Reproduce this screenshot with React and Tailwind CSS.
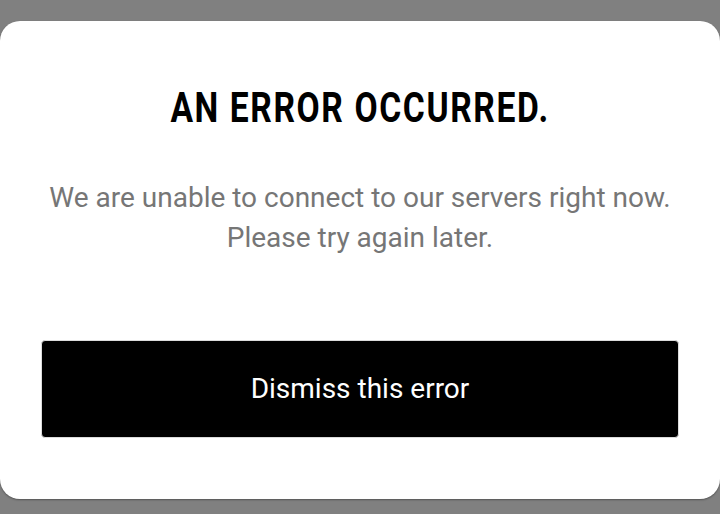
export default function App() {
  return (
    <div className="h-[514px] w-[720px] bg-[#808080] pt-[21px] overflow-hidden">
      <div className="h-[478px] w-[720px] rounded-[20px] bg-white shadow-[0_1px_2px_rgba(0,0,0,0.35)] flex flex-col items-center font-['Roboto',sans-serif]">
        <div className="mt-[61px] h-[52px] flex items-center justify-center">
          <h1 className="inline-block scale-x-[0.8] whitespace-nowrap text-[42px] font-bold leading-none tracking-[2px] text-black">
            AN ERROR OCCURRED.
          </h1>
        </div>
        <p className="mt-[44px] text-center text-[28px] leading-[40px] text-[#767676]">
          We are unable to connect to our servers right now.
          <br />
          Please try again later.
        </p>
        <button
          type="button"
          className="mt-[82px] h-[98px] w-[638px] rounded-[4px] border border-[#dcdcdc] bg-black text-[28px] text-white"
        >
          Dismiss this error
        </button>
      </div>
    </div>
  );
}
